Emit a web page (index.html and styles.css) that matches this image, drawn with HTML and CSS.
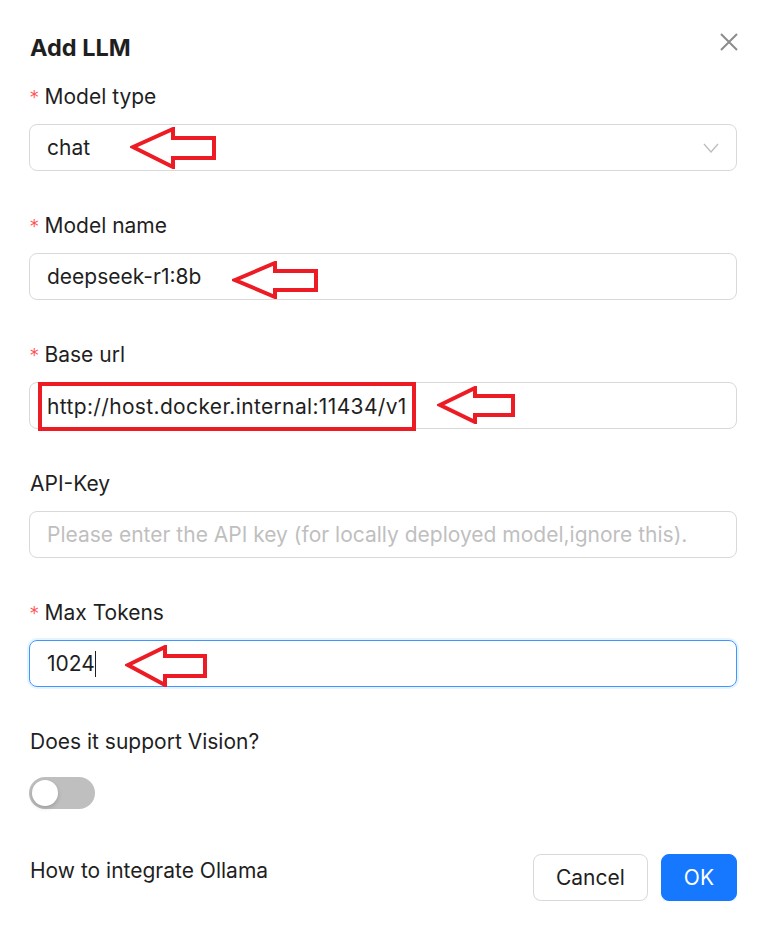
FILE: index.html
```html
<!DOCTYPE html>
<html>

<head>
  <title>Add LLM</title>
  <link rel="stylesheet" href="styles.css">
</head>

<body>
  <div class="modal">
    <div class="modal-header">
      <h3 class="modal-title">Add LLM</h3>
      <button class="modal-close" aria-label="Close">
        <svg width="20" height="20" viewBox="0 0 20 20">
          <path d="M2 2 L18 18 M18 2 L2 18" stroke="#8c8c8c" stroke-width="2" fill="none" />
        </svg>
      </button>
    </div>

    <form class="form">
      <!-- Model type -->
      <div class="form-item">
        <label class="form-label required">Model type</label>
        <div class="field select">
          <span class="field-text">chat</span>
          <svg class="note-arrow arrow-chat" width="86" height="42" viewBox="0 0 86 42">
            <polygon points="3,20 43,2 43,11 84,11 84,31 43,31 43,40" />
          </svg>
          <svg class="chevron" width="16" height="10" viewBox="0 0 16 10">
            <path d="M1 1 L8 9 L15 1" stroke="#bfbfbf" stroke-width="1.4" fill="none" />
          </svg>
        </div>
      </div>

      <!-- Model name -->
      <div class="form-item">
        <label class="form-label required">Model name</label>
        <div class="field">
          <span class="field-text">deepseek-r1:8b</span>
          <svg class="note-arrow arrow-name" width="86" height="38" viewBox="0 0 86 38">
            <polygon points="3,19 43,2 43,10 84,10 84,29 43,29 43,36" />
          </svg>
        </div>
      </div>

      <!-- Base url -->
      <div class="form-item">
        <label class="form-label required">Base url</label>
        <div class="field">
          <span class="note-box">http://host.docker.internal:11434/v1</span>
          <svg class="note-arrow arrow-url" width="78" height="38" viewBox="0 0 78 38">
            <polygon points="3,19 38,2 38,10 76,10 76,29 38,29 38,36" />
          </svg>
        </div>
      </div>

      <!-- API-Key -->
      <div class="form-item">
        <label class="form-label">API-Key</label>
        <div class="field">
          <span class="placeholder">Please enter the API key (for locally deployed model,ignore this).</span>
        </div>
      </div>

      <!-- Max Tokens -->
      <div class="form-item">
        <label class="form-label required">Max Tokens</label>
        <div class="field focused">
          <span class="field-text">1024</span><span class="caret"></span>
          <svg class="note-arrow arrow-tokens" width="82" height="42" viewBox="0 0 82 42">
            <polygon points="3,20 40,2 40,11 80,11 80,31 40,31 40,40" />
          </svg>
        </div>
      </div>

      <!-- Vision -->
      <div class="form-item last">
        <label class="form-label">Does it support Vision?</label>
        <div class="switch">
          <span class="switch-knob"></span>
        </div>
      </div>
    </form>

    <div class="modal-footer">
      <a class="help-link">How to integrate Ollama</a>
      <div class="actions">
        <button class="btn">Cancel</button>
        <button class="btn btn-primary">OK</button>
      </div>
    </div>
  </div>
</body>

</html>
```

FILE: styles.css
```css
body {
  margin: 0;
  background-color: #ffffff;
  font-family: Inter, "Noto Sans", sans-serif;
  color: #1f1f1f;
}

/* Ventana modal */
.modal {
  padding: 32px 30px 0 29px;
}

.modal-header {
  display: flex;
  justify-content: space-between;
  align-items: flex-start;
  margin-bottom: 12px;
}

.modal-title {
  margin: 0;
  font-size: 23.5px;
  font-weight: 650;
  line-height: 32px;
  padding-left: 1px;
}

.modal-close {
  border: none;
  background: none;
  padding: 0;
  margin: -1px -3px 0 0;
  width: 22px;
  height: 22px;
  display: flex;
  align-items: center;
  justify-content: center;
}

/* Formulario */
.form-item {
  margin-bottom: 34px;
}

.form-item.last {
  margin-bottom: 0;
}

.form-label {
  display: flex;
  align-items: center;
  height: 40px;
  margin-bottom: 8px;
  font-size: 21px;
  padding-left: 1px;
}

.form-label.required::before {
  content: "*";
  color: #ff4d4f;
  font-family: "DejaVu Sans", sans-serif;
  font-size: 17px;
  margin-right: 6px;
  margin-top: 2px;
}

.field {
  display: flex;
  align-items: center;
  height: 47px;
  box-sizing: border-box;
  border: 1px solid #d9d9d9;
  border-radius: 8px;
  padding: 0 17px;
  font-size: 21px;
}

.field.focused {
  border-color: #4096ff;
  box-shadow: 0 0 0 2px rgba(5, 145, 255, 0.1);
}

.placeholder {
  color: #bfbfbf;
}

.caret {
  display: inline-block;
  width: 1px;
  height: 26px;
  background-color: #1f1f1f;
}

.chevron {
  margin-left: auto;
  margin-right: 0;
}

/* Anotaciones rojas */
.note-arrow {
  fill: none;
  stroke: #ed1c24;
  stroke-width: 4;
  stroke-linejoin: miter;
}

.arrow-chat {
  margin-left: 40px;
}

.arrow-name {
  margin-left: 31px;
  margin-top: 6px;
}

.arrow-url {
  margin-left: 21px;
  margin-top: -1px;
}

.arrow-tokens {
  margin-left: 29px;
  margin-top: 4px;
}

.note-box {
  display: flex;
  align-items: center;
  height: 49px;
  box-sizing: border-box;
  border: 4px solid #ed1c24;
  margin-left: -9px;
  padding: 0 5px;
  margin-top: 2px;
  letter-spacing: 0.35px;
}

/* Interruptor */
.switch {
  position: relative;
  width: 66px;
  height: 32px;
  border-radius: 16px;
  background-color: #bfbfbf;
  margin-top: 16px;
}

.switch-knob {
  position: absolute;
  top: 3px;
  left: 3px;
  width: 26px;
  height: 26px;
  border-radius: 50%;
  background-color: #ffffff;
  box-shadow: 0 2px 4px rgba(0, 35, 11, 0.2);
}

/* Pie del modal */
.modal-footer {
  display: flex;
  justify-content: space-between;
  align-items: flex-start;
  margin-top: 45px;
}

.help-link {
  font-size: 21px;
  line-height: 32px;
  padding-left: 1px;
  margin-top: 1px;
}

.actions {
  display: flex;
  gap: 13px;
}

.btn {
  box-sizing: border-box;
  height: 47px;
  padding: 0 22px;
  border: 1px solid #d9d9d9;
  border-radius: 8px;
  background-color: #ffffff;
  font-family: Inter, "Noto Sans", sans-serif;
  font-size: 21px;
  color: #1f1f1f;
  box-shadow: 0 2px 0 rgba(0, 0, 0, 0.02);
}

.btn-primary {
  background-color: #1677ff;
  border-color: #1677ff;
  color: #ffffff;
  padding: 0 22px;
  box-shadow: 0 2px 0 rgba(5, 145, 255, 0.1);
}
```
